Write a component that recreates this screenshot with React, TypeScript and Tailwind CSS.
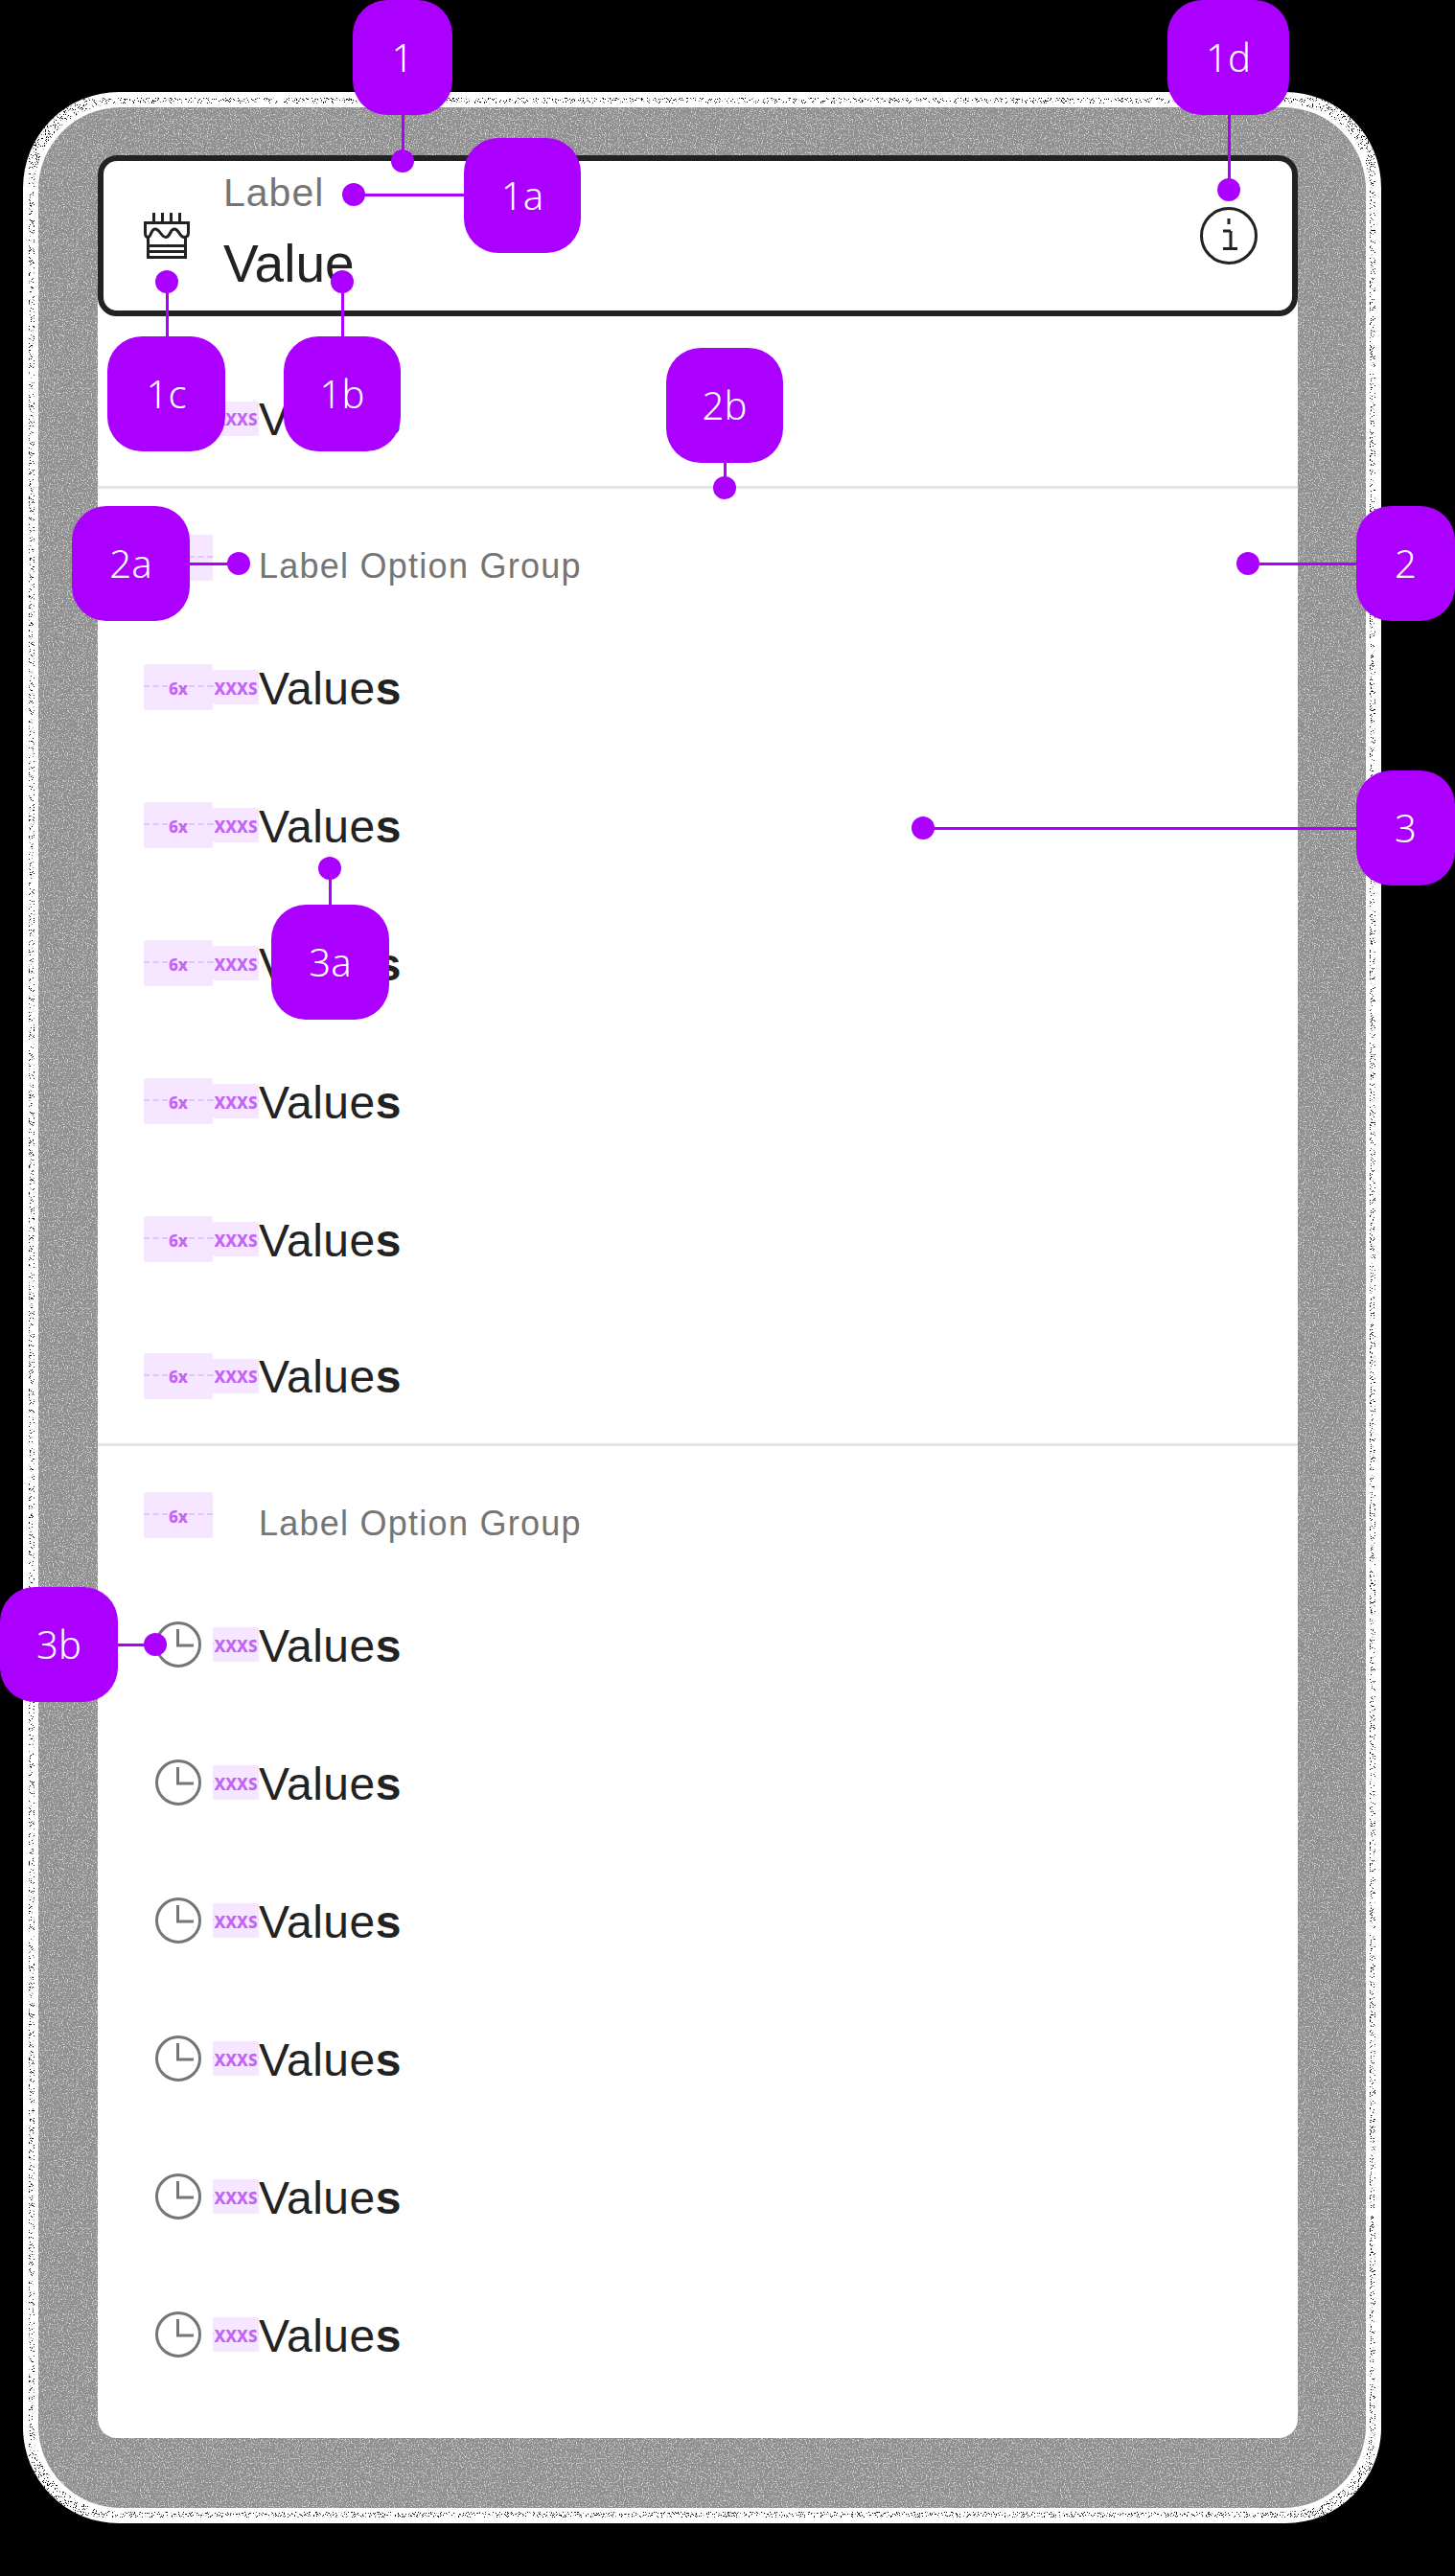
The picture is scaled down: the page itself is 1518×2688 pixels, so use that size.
import type { ReactNode } from "react";

const sans = "font-['Liberation_Sans',Arial,sans-serif]";

function Placeholder({ label, wide }: { label: string; wide?: boolean }) {
  return (
    <div
      className={`relative flex shrink-0 items-center justify-center rounded-[2px] bg-[#f6e6ff] ${
        wide ? "h-12 w-[72px]" : "h-9 w-12"
      }`}
    >
      <div className="absolute inset-x-0 top-1/2 -mt-[2px] border-t-2 border-dashed border-[#e2c4f9]" />
      <span className="relative mt-[2px] bg-[#f6e6ff] px-[1px] font-['Noto_Sans',sans-serif] text-[17px] leading-none font-extrabold text-[#c264f5]">
        {label}
      </span>
    </div>
  );
}

function ClockIcon() {
  return (
    <svg width="48" height="48" viewBox="0 0 48 48" fill="none" stroke="#757575" strokeWidth="3">
      <circle cx="24" cy="24" r="22.5" />
      <path d="M23.5 8V25H40" />
    </svg>
  );
}

function CakeIcon() {
  return (
    <svg width="48" height="48" viewBox="0 0 48 48" fill="none" stroke="#222" strokeWidth="3" className="shrink-0">
      <path d="M10.5 0V10M19.5 0V10M28.5 0V10M37.5 0V10" />
      <path d="M1.5 10.5V21C1.5 24 3 25.5 4.5 25.5C8 25.5 7 17 12 17C17 17 18 25.5 23 25.5C28 25.5 27 17 32 17C37 17 37 25.5 42 25.5C44.5 25.5 46.5 24 46.5 21V10.5Z" />
      <path d="M4.5 25V46.5H43.5V25M4.5 34.5H43.5M4.5 40.5H43.5" />
    </svg>
  );
}

function InfoIcon() {
  return (
    <svg width="60" height="60" viewBox="0 0 60 60" fill="none" stroke="#222" className="shrink-0">
      <circle cx="30" cy="30" r="28.5" strokeWidth="3" />
      <path d="M30 12V18M24 25H32M32 25V44M24 43.5H39" strokeWidth="3" />
    </svg>
  );
}

function Row({ icon, short }: { icon: ReactNode; short?: boolean }) {
  return (
    <div className={`flex items-center pl-12 ${short ? "h-[141px]" : "h-36"}`}>
      <div className="flex w-[72px] shrink-0 justify-center">{icon}</div>
      <Placeholder label="XXXS" />
      <span className={`${sans} mt-[3px] text-[48px] leading-none tracking-[0.5px] text-[#222]`}>
        Value<b>s</b>
      </span>
    </div>
  );
}

function GroupHeader() {
  return (
    <div className="flex h-[135px] items-start pt-12 pl-12">
      <Placeholder label="6x" wide />
      <span className={`${sans} mt-[6px] ml-12 text-[36px] leading-[54px] tracking-[1.25px] text-[#757575]`}>
        Label Option Group
      </span>
    </div>
  );
}

const rows = [0, 1, 2, 3, 4, 5];

const badges = [
  { text: "1", box: "left-[368px] top-0 w-[104px]" },
  { text: "1a", box: "left-[484px] top-[144px] w-[122px]" },
  { text: "1b", box: "left-[296px] top-[351px] w-[122px]" },
  { text: "1c", box: "left-[112px] top-[351px] w-[123px]" },
  { text: "1d", box: "left-[1218px] top-0 w-[127px]" },
  { text: "2", box: "left-[1415px] top-[528px] w-[103px]" },
  { text: "2a", box: "left-[75px] top-[528px] w-[123px]" },
  { text: "2b", box: "left-[695px] top-[363px] w-[122px]" },
  { text: "3", box: "left-[1415px] top-[804px] w-[103px]" },
  { text: "3a", box: "left-[283px] top-[944px] w-[123px]" },
  { text: "3b", box: "left-0 top-[1656px] w-[123px]" },
];

const dots = [
  "left-[408px] top-[156px]",
  "left-[357px] top-[191px]",
  "left-[345px] top-[282px]",
  "left-[162px] top-[282px]",
  "left-[1270px] top-[186px]",
  "left-[1290px] top-[576px]",
  "left-[237px] top-[576px]",
  "left-[744px] top-[497px]",
  "left-[951px] top-[852px]",
  "left-[332px] top-[894px]",
  "left-[150px] top-[1704px]",
];

const lines = [
  "left-[419px] top-[120px] h-[48px] w-[3px]",
  "left-[368px] top-[202px] h-[3px] w-[116px]",
  "left-[356px] top-[293px] h-[58px] w-[3px]",
  "left-[173px] top-[293px] h-[58px] w-[3px]",
  "left-[1281px] top-[120px] h-[78px] w-[3px]",
  "left-[1302px] top-[587px] h-[3px] w-[113px]",
  "left-[198px] top-[587px] h-[3px] w-[51px]",
  "left-[755px] top-[482px] h-[26px] w-[3px]",
  "left-[963px] top-[863px] h-[3px] w-[452px]",
  "left-[343px] top-[905px] h-[39px] w-[3px]",
  "left-[123px] top-[1715px] h-[3px] w-[39px]",
];

function Frame() {
  return (
    <svg className="absolute inset-0 h-full w-full" width="1417" height="2551">
      <defs>
        <filter id="speckle" x="0" y="0" width="100%" height="100%">
          <feTurbulence type="fractalNoise" baseFrequency="1.1" numOctaves="2" seed="4" />
          <feColorMatrix values="0 0 0 0 0  0 0 0 0 0  0 0 0 0 0  0 0 0 -14 5.6" />
          <feComposite in2="SourceAlpha" operator="in" />
        </filter>
        <filter id="mottle" x="0" y="0" width="100%" height="100%">
          <feTurbulence type="fractalNoise" baseFrequency="0.8" numOctaves="2" seed="9" />
          <feColorMatrix values="0 0 0 0 0.64  0 0 0 0 0.64  0 0 0 0 0.64  0 0 0 -6 2.8" />
          <feComposite in2="SourceAlpha" operator="in" />
        </filter>
        <filter id="grit" x="0" y="0" width="100%" height="100%">
          <feTurbulence type="fractalNoise" baseFrequency="0.9" numOctaves="1" seed="2" />
          <feColorMatrix values="0 0 0 0 0.35  0 0 0 0 0.35  0 0 0 0 0.35  0 0 0 -8 3.6" />
          <feComposite in2="SourceAlpha" operator="in" />
        </filter>
      </defs>
      <rect y="8" width="1417" height="2537" rx="100" fill="#ffffff" />
      <rect x="16" y="24" width="1385" height="2505" rx="86" fill="#8f8f8f" />
      <rect x="16" y="24" width="1385" height="2505" rx="86" fill="#000" filter="url(#mottle)" />
      <rect x="24" y="32" width="1369" height="2489" rx="78" fill="none" stroke="#000" strokeWidth="8" filter="url(#grit)" />
      <rect x="6" y="14" width="1405" height="2525" rx="94" fill="none" stroke="#000" strokeWidth="12" filter="url(#speckle)" />
    </svg>
  );
}

export default function App() {
  return (
    <div className="relative h-[2688px] w-[1518px] overflow-hidden bg-black pt-[88px] pl-6">
      <div className="relative h-[2551px] w-[1417px] pt-[74px] pl-[78px]">
        <Frame />
        <div className="relative w-[1252px] rounded-[20px] bg-white pb-9">
          <div className="flex h-[168px] items-center rounded-[20px] border-[6px] border-[#222] bg-white pr-[36px] pl-[42px]">
            <CakeIcon />
            <div className="ml-[35px] flex flex-1 flex-col">
              <span className={`${sans} mt-[-8px] text-[41px] leading-[56px] tracking-[1px] text-[#757575]`}>
                Label
              </span>
              <span className={`${sans} mt-[10px] text-[55px] leading-[72px] text-[#222]`}>Value</span>
            </div>
            <InfoIcon />
          </div>

          <div className="mt-9 border-b-[3px] border-[#e6e6e6]">
            <Row short icon={<Placeholder label="6x" wide />} />
          </div>

          <div className="border-b-[3px] border-[#e6e6e6]">
            <GroupHeader />
            {rows.map((r) => (
              <Row key={r} short={r === 5} icon={<Placeholder label="6x" wide />} />
            ))}
          </div>

          <div>
            <GroupHeader />
            {rows.map((r) => (
              <Row key={r} icon={<ClockIcon />} />
            ))}
          </div>
        </div>
      </div>

      {lines.map((l) => (
        <div key={l} className={`absolute bg-[#ab00ff] ${l}`} />
      ))}
      {dots.map((d) => (
        <div key={d} className={`absolute h-6 w-6 rounded-full bg-[#ab00ff] ${d}`} />
      ))}
      {badges.map((b) => (
        <div
          key={b.text}
          className={`absolute flex h-[120px] items-center justify-center rounded-[36px] bg-[#ab00ff] font-['Noto_Sans',sans-serif] text-[40px] font-light text-white ${b.box}`}
        >
          {b.text}
        </div>
      ))}
    </div>
  );
}
